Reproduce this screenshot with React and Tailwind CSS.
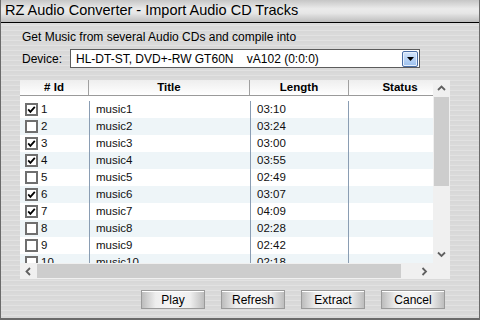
import React from 'react'

const tracks = [
  { id: 1, title: 'music1', len: '03:10', on: true },
  { id: 2, title: 'music2', len: '03:24', on: false },
  { id: 3, title: 'music3', len: '03:00', on: true },
  { id: 4, title: 'music4', len: '03:55', on: true },
  { id: 5, title: 'music5', len: '02:49', on: false },
  { id: 6, title: 'music6', len: '03:07', on: true },
  { id: 7, title: 'music7', len: '04:09', on: true },
  { id: 8, title: 'music8', len: '02:28', on: false },
  { id: 9, title: 'music9', len: '02:42', on: false },
  { id: 10, title: 'music10', len: '02:18', on: false },
]

function Check({ on }) {
  return (
    <svg width="13" height="13" viewBox="0 0 13 13" className="shrink-0">
      <rect x="1" y="1" width="11" height="11" fill="#fff" stroke="#6f6f6f" strokeWidth="2" />
      {on && <path d="M3.2 6.4 L5.4 8.8 L9.8 3.8" fill="none" stroke="#000" strokeWidth="1.8" />}
    </svg>
  )
}

function Arrow({ dir }) {
  const d = {
    up: 'M1 5 L4.5 1.5 L8 5',
    down: 'M1 1.5 L4.5 5 L8 1.5',
    left: 'M5 1 L1.5 4.5 L5 8',
    right: 'M1.5 1 L5 4.5 L1.5 8',
  }[dir]
  const wide = dir === 'up' || dir === 'down'
  return (
    <svg width={wide ? 9 : 7} height={wide ? 7 : 9} viewBox={wide ? '0 0 9 7' : '0 0 7 9'}>
      <path d={d} fill="none" stroke="#606060" strokeWidth="1.8" />
    </svg>
  )
}

function Btn({ children }) {
  return (
    <button className="w-[64px] h-[19px] border border-[#9a9a9a] text-[12px] text-black flex items-center justify-center bg-[linear-gradient(to_right,#bdbdbd,#eeeeee_22%,#f6f6f6_50%,#eeeeee_78%,#bdbdbd)] shadow-[inset_0_1px_0_#ffffff]">
      {children}
    </button>
  )
}

export default function App() {
  return (
    <div className="w-[480px] h-[320px] flex flex-col border-l border-r border-b-2 border-[#6b6b6b] font-['Liberation_Sans',Arial,sans-serif] overflow-hidden">
      {/* title bar */}
      <div className="h-[23px] shrink-0 flex items-center pl-[4px] border-b border-black bg-[linear-gradient(to_bottom,#c6c6c6,#ebebeb_40%,#e6e6e6_60%,#bdbdbd)] text-[14.5px] text-black">
        RZ Audio Converter - Import Audio CD Tracks
      </div>

      {/* body */}
      <div className="flex-1 pl-[19px] bg-[repeating-linear-gradient(to_bottom,#dadada_0px,#dadada_2px,#e2e2e2_2px,#e2e2e2_3px,#d8d8d8_3px,#d8d8d8_5px)]">
        <div className="pt-[7px] pl-[2px] text-[12px] leading-[14px] text-black">
          Get Music from several Audio CDs and compile into
        </div>

        <div className="mt-[5px] flex items-center h-[19px]">
          <span className="w-[50px] pl-[2px] text-[12px] text-black">Device:</span>
          <div className="w-[350px] h-[19px] bg-white border border-[#5c5c5c] flex items-center pl-[5px] text-[12px] text-black">
            <span className="flex-1 whitespace-pre">HL-DT-ST, DVD+-RW GT60N    vA102 (0:0:0)</span>
            <div className="w-[16px] h-[16px] mr-[1px] rounded-[2px] border border-[#4a6ea6] bg-[linear-gradient(to_bottom,#d4e5fb,#9cc0ee)] flex items-center justify-center shadow-[inset_0_0_0_1px_#e8f1fd]">
              <svg width="7" height="4" viewBox="0 0 7 4"><path d="M0 0 H7 L3.5 4 Z" fill="#000" /></svg>
            </div>
          </div>
        </div>

        {/* list view */}
        <div className="mt-[12px] grid grid-cols-[413px_17px] grid-rows-[183px_16px] w-[430px]">
          <div className="bg-white overflow-hidden">
            <div className="flex w-[431px] h-[16px] border-b border-[#9a9a9a] bg-[linear-gradient(to_bottom,#eeeeee,#ffffff)] text-[11.5px] font-bold text-black">
              <div className="w-[69px] border-r border-[#a0a0a0] flex items-center justify-center"># Id</div>
              <div className="w-[161px] border-r border-[#a0a0a0] flex items-center justify-center">Title</div>
              <div className="w-[99px] border-r border-[#a0a0a0] flex items-center justify-center">Length</div>
              <div className="w-[102px] flex items-center justify-center">Status</div>
            </div>
            <div className="h-[5px] flex">
              <div className="w-[70px]" />
            </div>
            {tracks.map((t, i) => (
              <div key={t.id} className={`flex h-[17px] text-[11.5px] text-[#101010] ${i % 2 ? 'bg-[#eef5f8]' : 'bg-white'}`}>
                <div className="w-[70px] border-r border-[#8a9db3] flex items-center pl-[5px] gap-[3px]">
                  <Check on={t.on} />
                  <span>{t.id}</span>
                </div>
                <div className="w-[160px] pl-[6px] flex items-center">{t.title}</div>
                <div className="w-[99px] border-l border-r border-[#8a9db3] pl-[6px] flex items-center">{t.len}</div>
                <div className="flex-1" />
              </div>
            ))}
          </div>

          {/* vertical scrollbar */}
          <div className="bg-[#f0f0f0] flex flex-col">
            <div className="h-[17px] flex items-center justify-center"><Arrow dir="up" /></div>
            <div className="h-[89px] mx-[1px] bg-[#cdcdcd]" />
            <div className="flex-1" />
            <div className="h-[17px] flex items-center justify-center"><Arrow dir="down" /></div>
          </div>

          {/* horizontal scrollbar */}
          <div className="bg-[#f0f0f0] flex">
            <div className="w-[17px] flex items-center justify-center"><Arrow dir="left" /></div>
            <div className="w-[364px] my-[1px] bg-[#cdcdcd]" />
            <div className="flex-1" />
            <div className="w-[17px] flex items-center justify-center"><Arrow dir="right" /></div>
          </div>
          <div className="bg-[#f0f0f0]" />
        </div>

        <div className="mt-[11px] pl-[121px] flex gap-[16px]">
          <Btn>Play</Btn>
          <Btn>Refresh</Btn>
          <Btn>Extract</Btn>
          <Btn>Cancel</Btn>
        </div>
      </div>
    </div>
  )
}
